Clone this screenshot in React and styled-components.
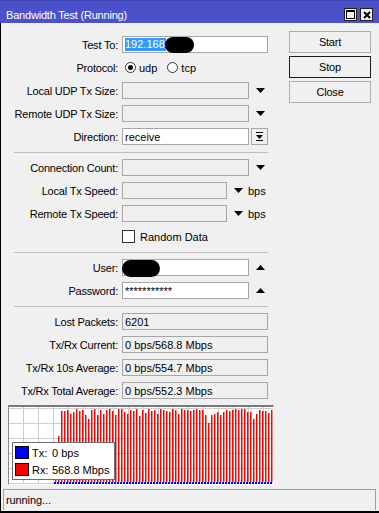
import React from 'react';
import styled, { createGlobalStyle } from 'styled-components';

const GlobalStyle = createGlobalStyle`
  html, body { margin: 0; padding: 0; background: #f0f0f0; }
  body { font-family: "Liberation Sans", Arial, sans-serif; font-size: 11px; color: #000; }
`;

const Window = styled.div`
  width: 379px;
  height: 513px;
  display: flex;
  flex-direction: column;
  background: #f0f0f0;
  overflow: hidden;
  box-sizing: border-box;
  border-bottom: 2px solid #000;
`;

const TitleBar = styled.div`
  height: 23px;
  flex: none;
  box-sizing: border-box;
  background: #4b51c8;
  border-top: 1px solid #3f44b3;
  display: flex;
  align-items: center;
  padding: 5px 6px 0 6px;
  color: #fff;
`;

const TitleText = styled.div`
  flex: 1;
  letter-spacing: -0.2px;
  white-space: nowrap;
`;

const TitleButtons = styled.div`
  display: flex;
  gap: 3px;
`;

const TitleButton = styled.div`
  width: 13px;
  height: 13px;
  box-sizing: border-box;
  border: 1px solid #222;
  background: #efefef;
  display: flex;
  align-items: center;
  justify-content: center;
`;

const Body = styled.div`
  flex: 1;
  min-height: 0;
  display: flex;
  flex-direction: column;
  border-left: 1px solid #000;
`;

const Main = styled.div`
  display: flex;
  padding-top: 8px;
`;

const FormColumn = styled.div`
  width: 273px;
  padding-top: 5px;
  display: flex;
  flex-direction: column;
  gap: 6px;
`;

const Row = styled.div`
  display: grid;
  grid-template-columns: 117px 146px;
  column-gap: 4px;
  height: 17px;
  align-items: center;
`;

const Label = styled.div`
  text-align: right;
  letter-spacing: -0.2px;
  white-space: nowrap;
`;

const Box = styled.div`
  width: ${p => p.$w || 146}px;
  height: 17px;
  box-sizing: border-box;
  border: 1px solid #a7a7a7;
  background: ${p => (p.$white ? '#fff' : '#f0f0f0')};
  padding: 0 2px;
  display: flex;
  align-items: center;
  white-space: nowrap;
  overflow: visible;
  flex: none;
`;

const FieldGroup = styled.div`
  display: flex;
  align-items: center;
`;

const ArrowSlot = styled.div`
  display: flex;
  align-items: center;
  padding-left: 7px;
`;

const Unit = styled.span`
  margin-left: 5px;
`;

const DropButton = styled.div`
  width: 17px;
  height: 17px;
  box-sizing: border-box;
  margin-left: 2px;
  border: 1px solid #a7a7a7;
  background: #f0f0f0;
  display: flex;
  align-items: center;
  justify-content: center;
`;

const Selected = styled.span`
  background: #3399ff;
  color: #fff;
  padding: 0 1px 0 0;
  line-height: 13px;
`;

const Redacted = styled.span`
  display: inline-block;
  background: #000;
  width: ${p => p.$w}px;
  height: ${p => p.$h}px;
  border-radius: ${p => p.$h / 2}px;
  margin-left: ${p => p.$ml || 0}px;
  margin-top: ${p => p.$mt || 0}px;
`;

const RadioGroup = styled.div`
  display: flex;
  align-items: center;
  padding-left: 3px;
`;

const RadioCircle = styled.span`
  width: 11px;
  height: 11px;
  box-sizing: border-box;
  border-radius: 50%;
  border: 1px solid #333;
  background: #fff;
  display: inline-flex;
  align-items: center;
  justify-content: center;
  margin-right: 3px;
  margin-left: ${p => p.$ml || 0}px;
  &::after {
    content: '';
    width: 5px;
    height: 5px;
    border-radius: 50%;
    background: ${p => (p.$on ? '#000' : 'transparent')};
  }
`;

const CheckRow = styled.div`
  display: flex;
  align-items: center;
`;

const CheckBox = styled.span`
  width: 13px;
  height: 13px;
  box-sizing: border-box;
  border: 1px solid #333;
  background: #fff;
  margin-right: 5px;
`;

const Separator = styled.div`
  height: 1px;
  margin: 1px 0 0 13px;
  width: 254px;
  background: #bdbdbd;
`;

const ButtonColumn = styled.div`
  margin-left: 15px;
  display: flex;
  flex-direction: column;
  gap: 3px;
`;

const Button = styled.div`
  width: 82px;
  height: 22px;
  box-sizing: border-box;
  border: 1px solid ${p => (p.$default ? '#1a1a1a' : '#adadad')};
  background: #f0f0f0;
  display: flex;
  align-items: center;
  justify-content: center;
  letter-spacing: -0.2px;
`;

const Graph = styled.div`
  position: relative;
  margin-left: 7px;
  width: 266px;
  height: 80px;
  box-sizing: border-box;
  border-top: 2px solid #7a7a7a;
  border-left: 1px solid #8a8a8a;
  border-right: 1px solid #fff;
  border-bottom: 1px solid #fff;
  background: #fff;
  svg { display: block; }
`;

const Legend = styled.div`
  position: absolute;
  left: 3px;
  top: 35px;
  width: 103px;
  height: 38px;
  box-sizing: border-box;
  border: 1px solid #6e6e6e;
  background: #fff;
  padding: 3px 2px;
  display: flex;
  flex-direction: column;
  gap: 4px;
`;

const LegendRow = styled.div`
  display: flex;
  align-items: center;
  height: 13px;
`;

const Swatch = styled.span`
  width: 14px;
  height: 13px;
  box-sizing: border-box;
  border: 1px solid #000;
  background: ${p => p.$color};
  margin-right: 3px;
`;

const LegendKey = styled.span`
  width: 20px;
`;

const StatusBar = styled.div`
  margin: auto 3px 1px 2px;
  height: 21px;
  box-sizing: border-box;
  border: 1px solid #a0a0a0;
  border-bottom: none;
  padding-left: 2px;
  display: flex;
  align-items: center;
  letter-spacing: -0.1px;
`;

const DownArrow = () => (
  <svg width="9" height="5" viewBox="0 0 9 5"><polygon points="0,0 9,0 4.5,5" fill="#000" /></svg>
);
const UpArrow = () => (
  <svg width="9" height="5" viewBox="0 0 9 5"><polygon points="0,5 9,5 4.5,0" fill="#000" /></svg>
);
const DropIcon = () => (
  <svg width="7" height="9" viewBox="0 0 7 9">
    <rect x="0" y="0" width="7" height="1" fill="#000" />
    <polygon points="0,3 7,3 3.5,7" fill="#000" />
    <rect x="0" y="8" width="7" height="1" fill="#000" />
  </svg>
);

const earlyTops = [442, 436];
const midTops = [411, 411, 410, 414, 412, 409, 411, 410, 415, 419, 410, 409, 415, 410, 414, 410, 409, 411, 415, 409,
  409, 412, 414, 410, 411, 409, 416, 410, 413, 409, 411, 410, 414, 409, 410, 411, 412, 409, 410, 414];
const lateTops = [409, 410, 410, 411, 410, 409, 410, 410, 415, 423, 415, 414, 412, 415, 412, 410, 411, 410, 409, 410,
  409, 409, 412, 412, 419, 414, 410, 411, 411, 413, 410];
const tops = [...earlyTops, ...midTops, ...lateTops];

const Chart = () => {
  const vLines = [];
  for (let x = 14; x < 264; x += 15) vLines.push(x);
  const hLines = [1, 16, 31, 46, 61, 76];
  return (
    <svg width="264" height="77" viewBox="0 0 264 77">
      {vLines.map(x => <rect key={'v' + x} x={x} y="0" width="1" height="77" fill="#cdcdcd" />)}
      {hLines.map(y => <rect key={'h' + y} x="0" y={y} width="264" height="1" fill="#cdcdcd" />)}
      {tops.map((t, k) => {
        const x = 46 + 3 * k;
        const y = t - 407;
        return <rect key={'r' + k} x={x} y={y} width="1.5" height={75 - y} fill="#ff0000" />;
      })}
      {tops.map((t, k) => (
        <rect key={'b' + k} x={45 + 3 * k} y="75" width="2" height="2" fill="#0000ff" />
      ))}
    </svg>
  );
};

export default function App() {
  return (
    <>
      <GlobalStyle />
      <Window>
        <TitleBar>
          <TitleText>Bandwidth Test (Running)</TitleText>
          <TitleButtons>
            <TitleButton>
              <svg width="9" height="9" viewBox="0 0 9 9">
                <rect x="0.5" y="0.5" width="8" height="8" fill="none" stroke="#000" />
                <rect x="0" y="0" width="9" height="2" fill="#000" />
              </svg>
            </TitleButton>
            <TitleButton>
              <svg width="8" height="8" viewBox="0 0 8 8">
                <path d="M1 1 L7 7 M7 1 L1 7" stroke="#000" strokeWidth="2" />
              </svg>
            </TitleButton>
          </TitleButtons>
        </TitleBar>
        <Body>
          <Main>
            <FormColumn>
              <Row>
                <Label>Test To:</Label>
                <Box $white>
                  <Selected>192.168</Selected>
                  <Redacted $w={29} $h={16} $ml={-1} />
                </Box>
              </Row>
              <Row>
                <Label>Protocol:</Label>
                <RadioGroup>
                  <RadioCircle $on />udp
                  <RadioCircle $ml={10} />tcp
                </RadioGroup>
              </Row>
              <Row>
                <Label>Local UDP Tx Size:</Label>
                <FieldGroup>
                  <Box $w={127} />
                  <ArrowSlot><DownArrow /></ArrowSlot>
                </FieldGroup>
              </Row>
              <Row>
                <Label>Remote UDP Tx Size:</Label>
                <FieldGroup>
                  <Box $w={127} />
                  <ArrowSlot><DownArrow /></ArrowSlot>
                </FieldGroup>
              </Row>
              <Row>
                <Label>Direction:</Label>
                <FieldGroup>
                  <Box $w={127} $white>receive</Box>
                  <DropButton><DropIcon /></DropButton>
                </FieldGroup>
              </Row>
              <Separator />
              <Row>
                <Label>Connection Count:</Label>
                <FieldGroup>
                  <Box $w={127} />
                  <ArrowSlot><DownArrow /></ArrowSlot>
                </FieldGroup>
              </Row>
              <Row>
                <Label>Local Tx Speed:</Label>
                <FieldGroup>
                  <Box $w={105} />
                  <ArrowSlot><DownArrow /></ArrowSlot>
                  <Unit>bps</Unit>
                </FieldGroup>
              </Row>
              <Row>
                <Label>Remote Tx Speed:</Label>
                <FieldGroup>
                  <Box $w={105} />
                  <ArrowSlot><DownArrow /></ArrowSlot>
                  <Unit>bps</Unit>
                </FieldGroup>
              </Row>
              <Row>
                <Label />
                <CheckRow>
                  <CheckBox />Random Data
                </CheckRow>
              </Row>
              <Separator />
              <Row>
                <Label>User:</Label>
                <FieldGroup>
                  <Box $w={127} $white>
                    <Redacted $w={38} $h={17} $ml={-3} $mt={2} />
                  </Box>
                  <ArrowSlot><UpArrow /></ArrowSlot>
                </FieldGroup>
              </Row>
              <Row>
                <Label>Password:</Label>
                <FieldGroup>
                  <Box $w={127} $white>***********</Box>
                  <ArrowSlot><UpArrow /></ArrowSlot>
                </FieldGroup>
              </Row>
              <Separator />
              <Row>
                <Label>Lost Packets:</Label>
                <Box>6201</Box>
              </Row>
              <Row>
                <Label>Tx/Rx Current:</Label>
                <Box>0 bps/568.8 Mbps</Box>
              </Row>
              <Row>
                <Label>Tx/Rx 10s Average:</Label>
                <Box>0 bps/554.7 Mbps</Box>
              </Row>
              <Row>
                <Label>Tx/Rx Total Average:</Label>
                <Box>0 bps/552.3 Mbps</Box>
              </Row>
              <Graph>
                <Chart />
                <Legend>
                  <LegendRow>
                    <Swatch $color="#0000ff" />
                    <LegendKey>Tx:</LegendKey>
                    <span>0 bps</span>
                  </LegendRow>
                  <LegendRow>
                    <Swatch $color="#ff0000" />
                    <LegendKey>Rx:</LegendKey>
                    <span>568.8 Mbps</span>
                  </LegendRow>
                </Legend>
              </Graph>
            </FormColumn>
            <ButtonColumn>
              <Button>Start</Button>
              <Button $default>Stop</Button>
              <Button>Close</Button>
            </ButtonColumn>
          </Main>
          <StatusBar>running...</StatusBar>
        </Body>
      </Window>
    </>
  );
}
